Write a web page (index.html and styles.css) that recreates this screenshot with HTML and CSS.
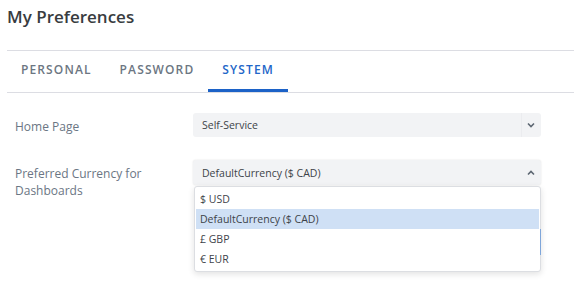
FILE: index.html
```html
<!DOCTYPE html>
<html>
<head>
    <title>My Preferences</title>
    <link rel="stylesheet" href="styles.css">
</head>
<body>
    <div class="page">
        <h1 class="page-title">My Preferences</h1>
        <div class="tabs">
            <div class="tab">PERSONAL</div>
            <div class="tab">PASSWORD</div>
            <div class="tab active">SYSTEM</div>
        </div>

        <div class="form">
            <div class="form-row">
                <label class="form-label">Home Page</label>
                <div class="select">
                    <span class="select-value">Self-Service</span>
                    <span class="select-arrow split">
                        <svg width="8" height="6" viewBox="0 0 8 6"><path d="M1 1.5 L4 4.5 L7 1.5" fill="none" stroke="#5d6772" stroke-width="1.6"/></svg>
                    </span>
                </div>
            </div>
            <div class="form-row">
                <label class="form-label">Preferred Currency for Dashboards</label>
                <div class="select-wrap">
                    <div class="select open">
                        <span class="select-value">DefaultCurrency ($ CAD)</span>
                        <span class="select-arrow">
                            <svg width="8" height="6" viewBox="0 0 8 6"><path d="M1 4.5 L4 1.5 L7 4.5" fill="none" stroke="#5d6772" stroke-width="1.6"/></svg>
                        </span>
                    </div>
                    <ul class="dropdown">
                        <li>$ USD</li>
                        <li class="selected">DefaultCurrency ($ CAD)</li>
                        <li>£ GBP</li>
                        <li>€ EUR</li>
                    </ul>
                </div>
            </div>
        </div>
    </div>
</body>
</html>
```

FILE: styles.css
```css
html, body {
    height: 100%;
}

body {
    margin: 0;
    padding: 0;
    background-color: #fff;
    font-family: "Open Sans", Arial, sans-serif;
}

.page {
    box-sizing: border-box;
    min-height: 299px;
    padding-top: 5px;
}

.page-title {
    margin: 0 0 0 7px;
    font-size: 17px;
    line-height: 24px;
    font-weight: 600;
    color: #383c40;
}

.tabs {
    display: flex;
    margin: 21px 0 0 7px;
    border-top: 1px solid #dcdde3;
    border-bottom: 1px solid #dcdde3;
}

.tab {
    height: 38px;
    line-height: 38px;
    padding: 0 14px;
    border-bottom: 3px solid transparent;
    font-size: 12px;
    font-weight: 600;
    letter-spacing: 1.12px;
    color: #6c7682;
}

.tab.active {
    color: #2366c8;
    border-bottom-color: #1c62c7;
}

.form {
    padding: 20px 0 0 15px;
}

.form-row {
    display: grid;
    grid-template-columns: 178px 348px;
    align-items: start;
    margin-bottom: 23px;
}

.form-label {
    padding-top: 5px;
    padding-right: 20px;
    font-size: 12px;
    line-height: 17px;
    color: #6b7684;
}

.select-wrap {
    position: relative;
    z-index: 2;
}

.select {
    display: flex;
    align-items: center;
    height: 24px;
    background-color: #f2f3f5;
    border-radius: 3px;
    font-size: 10.5px;
    color: #3d4349;
}

.select.open {
    height: 25px;
    box-shadow: 0 0 2px rgba(0, 0, 0, 0.12);
}

.select-value {
    flex: 1;
    padding-left: 9px;
}

.select-arrow {
    display: flex;
    align-items: center;
    justify-content: center;
    width: 18px;
    height: 100%;
    padding-right: 1px;
}

.select-arrow.split {
    border-left: 1px solid #ebecef;
}

.dropdown {
    position: absolute;
    top: 26px;
    left: 1px;
    width: 343px;
    margin: 0;
    padding: 2px 1px;
    list-style: none;
    background-color: #fff;
    border: 1px solid #dcdee2;
    border-radius: 3px;
    box-shadow: 0 2px 6px rgba(0, 0, 0, 0.12);
}

.dropdown::after {
    content: "";
    position: absolute;
    right: -1px;
    top: 42px;
    width: 1px;
    height: 26px;
    background-color: #7fa6da;
}

.dropdown li {
    height: 20px;
    line-height: 20px;
    padding-left: 4px;
    font-size: 10.5px;
    color: #3d4349;
}

.dropdown li.selected {
    background-color: #cfe0f5;
}
```
